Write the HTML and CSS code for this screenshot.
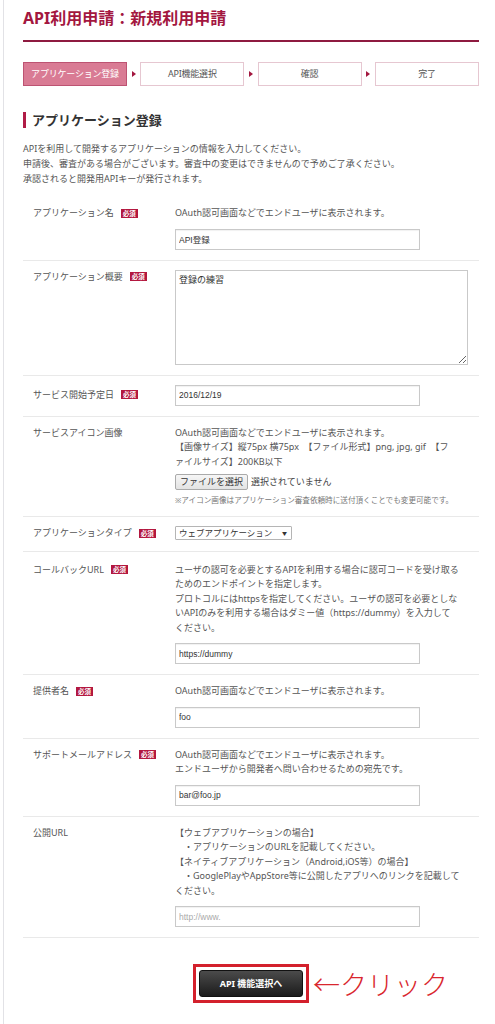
FILE: index.html
```html
<!DOCTYPE html>
<html lang="ja">
<head>
<meta charset="utf-8">
<title>API利用申請：新規利用申請</title>
<link rel="stylesheet" href="styles.css">
</head>
<body>
<div class="page">
  <h1 class="title">API利用申請：新規利用申請</h1>

  <ol class="steps">
    <li class="step step--active">アプリケーション登録</li>
    <li class="step-arrow"></li>
    <li class="step">API機能選択</li>
    <li class="step-arrow"></li>
    <li class="step">確認</li>
    <li class="step-arrow"></li>
    <li class="step">完了</li>
  </ol>

  <h2 class="section-title">アプリケーション登録</h2>

  <p class="intro">APIを利用して開発するアプリケーションの情報を入力してください。<br>申請後、審査がある場合がございます。審査中の変更はできませんので予めご了承ください。<br>承認されると開発用APIキーが発行されます。</p>

  <div class="form">
    <div class="row">
      <div class="label">アプリケーション名<span class="badge">必須</span></div>
      <div class="field">
        <p class="help">OAuth認可画面などでエンドユーザに表示されます。</p>
        <input class="input" type="text" value="API登録">
      </div>
    </div>

    <div class="row">
      <div class="label">アプリケーション概要<span class="badge">必須</span></div>
      <div class="field">
        <textarea class="textarea">登録の練習</textarea>
      </div>
    </div>

    <div class="row">
      <div class="label label--mid">サービス開始予定日<span class="badge">必須</span></div>
      <div class="field">
        <input class="input" type="text" value="2016/12/19">
      </div>
    </div>

    <div class="row">
      <div class="label">サービスアイコン画像</div>
      <div class="field">
        <p class="help help--tight">OAuth認可画面などでエンドユーザに表示されます。<br>【画像サイズ】縦75px 横75px　【ファイル形式】png, jpg, gif　【フ<br>ァイルサイズ】200KB以下</p>
        <div class="file">
          <button class="file-btn" type="button">ファイルを選択</button>
          <span class="file-name">選択されていません</span>
        </div>
        <p class="note">※アイコン画像はアプリケーション審査依頼時に送付頂くことでも変更可能です。</p>
      </div>
    </div>

    <div class="row">
      <div class="label">アプリケーションタイプ<span class="badge">必須</span></div>
      <div class="field">
        <div class="select"><span>ウェブアプリケーション</span><span class="select-caret">▼</span></div>
      </div>
    </div>

    <div class="row row--loose">
      <div class="label">コールバックURL<span class="badge">必須</span></div>
      <div class="field">
        <p class="help">ユーザの認可を必要とするAPIを利用する場合に認可コードを受け取る<br>ためのエンドポイントを指定します。<br>プロトコルにはhttpsを指定してください。ユーザの認可を必要としな<br>いAPIのみを利用する場合はダミー値（https://dummy）を入力して<br>ください。</p>
        <input class="input" type="text" value="https://dummy">
      </div>
    </div>

    <div class="row">
      <div class="label">提供者名<span class="badge">必須</span></div>
      <div class="field">
        <p class="help">OAuth認可画面などでエンドユーザに表示されます。</p>
        <input class="input" type="text" value="foo">
      </div>
    </div>

    <div class="row">
      <div class="label">サポートメールアドレス<span class="badge">必須</span></div>
      <div class="field">
        <p class="help">OAuth認可画面などでエンドユーザに表示されます。<br>エンドユーザから開発者へ問い合わせるための宛先です。</p>
        <input class="input" type="text" value="bar@foo.jp">
      </div>
    </div>

    <div class="row">
      <div class="label">公開URL</div>
      <div class="field">
        <p class="help">【ウェブアプリケーションの場合】<br>　・アプリケーションのURLを記載してください。<br>【ネイティブアプリケーション（Android,iOS等）の場合】<br>　・GooglePlayやAppStore等に公開したアプリへのリンクを記載して<br>ください。</p>
        <input class="input" type="text" placeholder="http://www.">
      </div>
    </div>
  </div>

  <div class="actions">
    <span class="callout"><button class="next-btn" type="button">API 機能選択へ</button></span>
    <span class="annotation">←クリック</span>
  </div>
</div>
</body>
</html>
```

FILE: styles.css
```css
html, body {
  margin: 0;
  padding: 0;
  background: #fff;
}

body {
  font-family: "Noto Sans", "Noto Sans CJK JP", sans-serif;
  color: #555;
  font-size: 9px;
}

.page {
  margin-left: 3px;
  border-left: 1px solid #e2e2e6;
  padding: 8px 16px 0 19px;
  min-height: 1024px;
  box-sizing: border-box;
}

.title {
  margin: 0;
  font-size: 16px;
  line-height: 20px;
  font-weight: 700;
  color: #a3173f;
  padding-bottom: 12px;
  border-bottom: 2px solid #8e1a40;
}

.steps {
  list-style: none;
  margin: 20px 0 0;
  padding: 0;
  display: flex;
  align-items: center;
  justify-content: space-between;
}

.step {
  width: 104px;
  height: 24px;
  box-sizing: border-box;
  border: 1px solid #e6c7d1;
  background: #fff;
  color: #555;
  font-size: 9px;
  line-height: 22px;
  text-align: center;
  white-space: nowrap;
  letter-spacing: -0.2px;
}

.step--active {
  background: #d97b94;
  border-color: #bd5372;
  color: #fff;
}

.step-arrow {
  width: 0;
  height: 0;
  border-left: 4px solid #a3173f;
  border-top: 3.5px solid transparent;
  border-bottom: 3.5px solid transparent;
}

.section-title {
  margin: 26px 0 0;
  font-size: 13px;
  line-height: 16px;
  font-weight: 700;
  color: #333;
  border-left: 3px solid #b01c46;
  padding-left: 6px;
}

.intro {
  margin: 13px 0 0;
  line-height: 15px;
  color: #555;
}

.form {
  margin-top: 11px;
}

.row {
  display: grid;
  grid-template-columns: 142px 300px;
  align-items: start;
  padding: 9px 0 10px 10px;
  border-bottom: 1px solid #e9e9e9;
}

.row--loose {
  padding-top: 11px;
}

.label {
  line-height: 14.5px;
  color: #555;
  display: flex;
  align-items: center;
  white-space: nowrap;
}

.label--mid {
  margin-top: 3px;
}

.badge {
  display: inline-block;
  margin-left: 7px;
  background: #b3173f;
  color: #fff;
  font-size: 6.5px;
  line-height: 9px;
  padding: 0 2px;
  font-weight: 700;
}

.field {
  display: flex;
  flex-direction: column;
  align-items: flex-start;
}

.help {
  margin: 0 0 8px;
  line-height: 14.5px;
  color: #555;
  white-space: nowrap;
}

.help--tight {
  margin-bottom: 5px;
}

.input {
  width: 245px;
  height: 21px;
  box-sizing: border-box;
  border: 1px solid #c9c9c9;
  box-shadow: inset 0 1px 1px rgba(0, 0, 0, 0.06);
  padding: 0 3px;
  font-family: "Liberation Sans", "Noto Sans CJK JP", sans-serif;
  font-size: 8.5px;
  color: #333;
  background: #fff;
  margin: 0;
}

.input::placeholder {
  color: #aaa;
}

.textarea {
  width: 293px;
  height: 95px;
  box-sizing: border-box;
  border: 1px solid #c9c9c9;
  padding: 2px 3px;
  font-family: "Liberation Sans", "Noto Sans CJK JP", sans-serif;
  font-size: 9px;
  color: #333;
  margin: 0;
  display: block;
}

.file {
  display: flex;
  align-items: center;
  gap: 3px;
}

.file-btn {
  height: 16px;
  padding: 0 4px;
  border: 1px solid #aaa;
  border-radius: 2px;
  background: linear-gradient(#f6f6f6, #e3e3e3);
  font-family: "Noto Sans CJK JP", sans-serif;
  font-size: 9px;
  line-height: 14px;
  color: #333;
}

.file-name {
  color: #444;
  line-height: 14px;
}

.note {
  margin: 4px 0 0;
  font-size: 7.6px;
  line-height: 12px;
  color: #777;
  white-space: nowrap;
}

.select {
  width: 117px;
  height: 14px;
  box-sizing: border-box;
  border: 1px solid #b5b5b5;
  border-radius: 1px;
  display: flex;
  align-items: center;
  justify-content: space-between;
  padding: 0 4px 0 3px;
  font-size: 8.5px;
  line-height: 12px;
  color: #333;
}

.select-caret {
  font-size: 5px;
  color: #333;
}

.actions {
  position: relative;
  display: flex;
  justify-content: center;
  margin-top: 26px;
}

.callout {
  display: inline-block;
  border: 3px solid #d3202c;
  padding: 3px;
  background: #fff;
}

.next-btn {
  display: block;
  width: 104px;
  height: 27px;
  border: 1px solid #111;
  border-radius: 3px;
  background: linear-gradient(#4b4b4b, #1b1b1b);
  color: #fff;
  font-family: "Noto Sans", "Noto Sans CJK JP", sans-serif;
  font-size: 9px;
  font-weight: 700;
  padding: 0;
}

.annotation {
  position: absolute;
  left: calc(50% + 62px);
  top: 3px;
  font-family: "Noto Sans CJK JP", sans-serif;
  font-size: 27px;
  line-height: 34px;
  font-weight: 300;
  color: #d9262e;
  white-space: nowrap;
}
```
